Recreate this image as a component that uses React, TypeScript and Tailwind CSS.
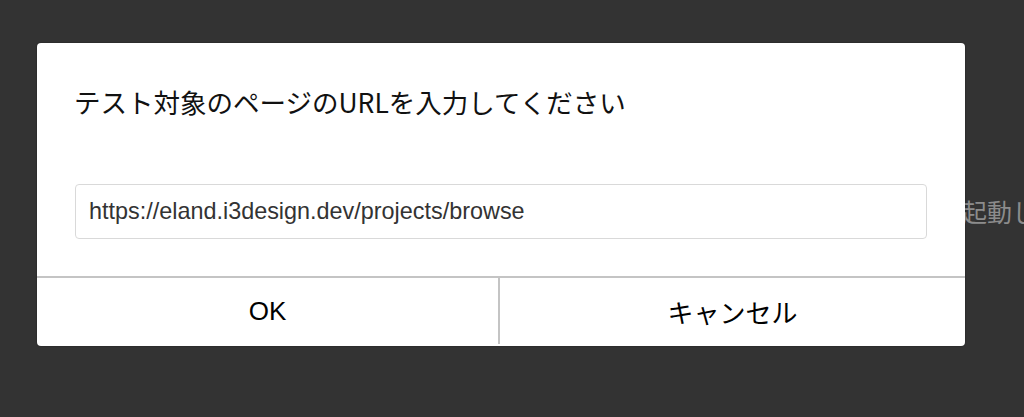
import React from "react";

export default function App() {
  return (
    <div
      className="relative w-[1024px] h-[417px] bg-[#333333] overflow-hidden"
      style={{ fontFamily: '"Liberation Sans", "Noto Sans CJK JP", sans-serif' }}
    >
      <div className="absolute left-[962px] top-[196px] text-[25px] leading-[34px] text-[#8c8c8c] whitespace-nowrap">
        起動し
      </div>
      <div className="absolute left-[37px] top-[43px] w-[928px] h-[303px] bg-white rounded-[4px] shadow-[0_0_2px_rgba(0,0,0,0.4)] flex flex-col overflow-hidden">
        <div className="px-[38px] pt-[42px] pb-[37px] flex flex-col">
          <div
            className="text-[26.5px] leading-[34px] text-[#111] whitespace-nowrap -ml-[1px]"
            style={{ fontFamily: '"Noto Sans CJK JP", "Liberation Sans", sans-serif' }}
          >
            テスト対象のページのURLを入力してください
          </div>
          <div className="mt-[65px] h-[55px] border border-[#d9d9d9] rounded-[4px] flex items-center pl-[13px] text-[23.4px] text-[#333]">
            https://eland.i3design.dev/projects/browse
          </div>
        </div>
        <div className="h-[68px] flex border-t-2 border-[#c4c4c4]">
          <div className="w-[463px] flex items-center justify-center text-[26px] text-black border-r-2 border-[#c4c4c4]">
            OK
          </div>
          <div
            className="flex-1 flex items-center justify-center text-[26px] text-black"
            style={{ fontFamily: '"Noto Sans CJK JP", "Liberation Sans", sans-serif' }}
          >
            キャンセル
          </div>
        </div>
      </div>
    </div>
  );
}
